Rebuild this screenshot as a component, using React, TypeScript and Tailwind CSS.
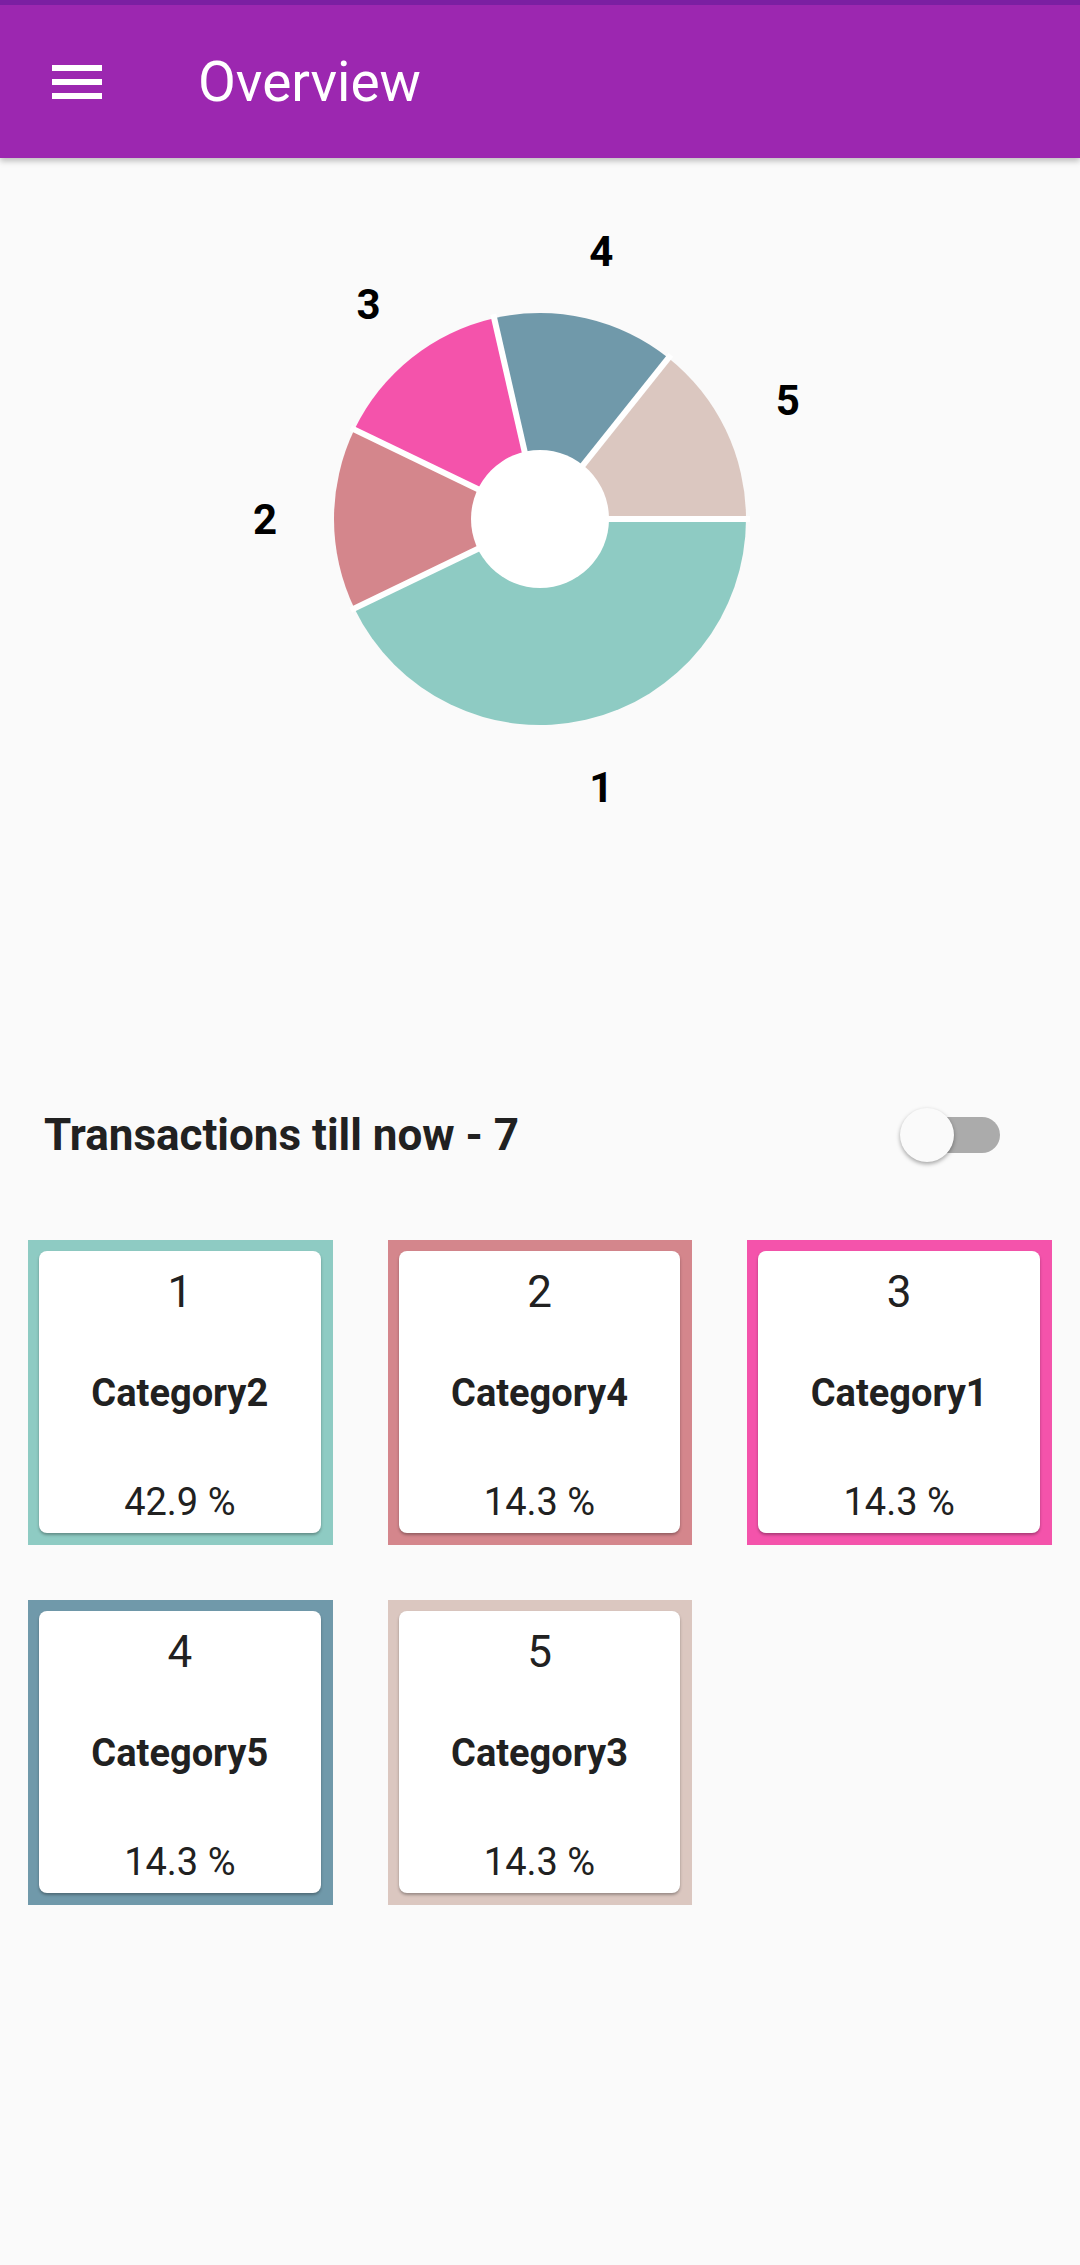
import React from "react";

const slices = [
  { label: "1", value: 3, color: "#8ecbc3" },
  { label: "2", value: 1, color: "#d4868c" },
  { label: "3", value: 1, color: "#f453ab" },
  { label: "4", value: 1, color: "#7099aa" },
  { label: "5", value: 1, color: "#dbc7c0" },
];

const cards = [
  { n: "1", name: "Category2", pct: "42.9 %", color: "#8ecbc3" },
  { n: "2", name: "Category4", pct: "14.3 %", color: "#d4868c" },
  { n: "3", name: "Category1", pct: "14.3 %", color: "#f453ab" },
  { n: "4", name: "Category5", pct: "14.3 %", color: "#7099aa" },
  { n: "5", name: "Category3", pct: "14.3 %", color: "#dbc7c0" },
];

function Pie() {
  const cx = 540;
  const cy = 361;
  const R = 206;
  const total = slices.reduce((s, x) => s + x.value, 0);
  const rad = (d: number) => (d * Math.PI) / 180;
  let acc = 0;
  const parts = slices.map((s) => {
    const a0 = (acc / total) * 360;
    acc += s.value;
    const a1 = (acc / total) * 360;
    return { ...s, a0, a1 };
  });
  return (
    <svg width="1080" height="922" viewBox="0 0 1080 922" className="block">
      {parts.map((s) => {
        const large = s.a1 - s.a0 > 180 ? 1 : 0;
        const x0 = cx + R * Math.cos(rad(s.a0));
        const y0 = cy + R * Math.sin(rad(s.a0));
        const x1 = cx + R * Math.cos(rad(s.a1));
        const y1 = cy + R * Math.sin(rad(s.a1));
        return (
          <path
            key={"p" + s.label}
            d={`M ${cx} ${cy} L ${x0} ${y0} A ${R} ${R} 0 ${large} 1 ${x1} ${y1} Z`}
            fill={s.color}
          />
        );
      })}
      {parts.map((s) => (
        <line
          key={"l" + s.label}
          x1={cx}
          y1={cy}
          x2={cx + (R + 4) * Math.cos(rad(s.a0))}
          y2={cy + (R + 4) * Math.sin(rad(s.a0))}
          stroke="#ffffff"
          strokeWidth={6}
        />
      ))}
      <circle cx={cx} cy={cy} r={69} fill="#ffffff" />
      {parts.map((s) => {
        const mid = (s.a0 + s.a1) / 2;
        const lx = cx + 275 * Math.cos(rad(mid));
        const ly = cy + 275 * Math.sin(rad(mid));
        return (
          <text
            key={"t" + s.label}
            x={lx}
            y={ly + 15}
            textAnchor="middle"
            fontSize={42}
            fontWeight={700}
            fill="#000000"
            style={{ fontFamily: "Roboto, sans-serif" }}
          >
            {s.label}
          </text>
        );
      })}
    </svg>
  );
}

export default function App() {
  return (
    <div className="w-[1080px] h-[2265px] bg-[#fafafa] font-['Roboto',sans-serif] overflow-hidden">
      <header className="relative z-10 h-[158px] bg-[#9c27b0] border-t-[5px] border-[#7b1fa2] flex items-center shadow-[0_3px_6px_rgba(0,0,0,0.25)]">
        <svg width="50" height="34" viewBox="0 0 50 34" className="ml-[52px] shrink-0">
          <rect x="0" y="0" width="50" height="6" fill="#ffffff" />
          <rect x="0" y="14" width="50" height="6" fill="#ffffff" />
          <rect x="0" y="28" width="50" height="6" fill="#ffffff" />
        </svg>
        <h1 className="ml-[96px] mt-[2px] text-[55px] leading-none text-white font-normal">Overview</h1>
      </header>

      <Pie />

      <div className="h-[110px] flex items-center justify-between pl-[44px] pr-[80px]">
        <span className="text-[44px] leading-none font-bold text-[#212121]">Transactions till now - 7</span>
        <div className="relative w-[100px] h-[56px]">
          <div className="absolute right-0 top-[10px] w-[92px] h-[36px] rounded-full bg-[#ababab]" />
          <div className="absolute left-0 top-[1px] w-[54px] h-[54px] rounded-full bg-[#fafafa] shadow-[0_2px_4px_rgba(0,0,0,0.35)]" />
        </div>
      </div>

      <div className="mt-[50px] px-[28px] grid grid-cols-3 gap-[55px]">
        {cards.map((c) => (
          <div
            key={c.n}
            className="h-[305px] pl-[11px] pr-[12px] pt-[11px] pb-[12px]"
            style={{ backgroundColor: c.color }}
          >
            <div className="h-full bg-white rounded-[8px] shadow-[0_2px_3px_rgba(0,0,0,0.3)] flex flex-col items-center text-[#212121]">
              <div className="mt-[19px] text-[44px] leading-none font-normal">{c.n}</div>
              <div className="mt-[60px] text-[38px] leading-none font-bold">{c.name}</div>
              <div className="mt-[71px] text-[38px] leading-none font-normal">{c.pct}</div>
            </div>
          </div>
        ))}
      </div>
    </div>
  );
}
